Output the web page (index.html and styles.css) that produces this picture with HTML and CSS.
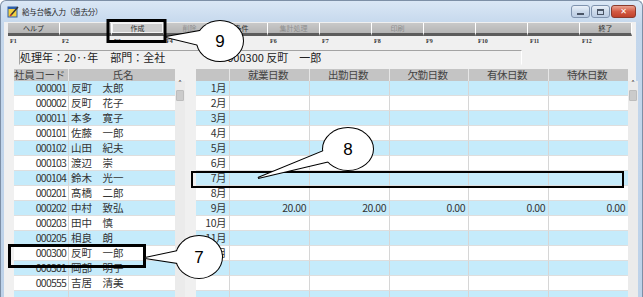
FILE: index.html
```html
<!DOCTYPE html>
<html lang="ja">
<head>
    <meta charset="UTF-8">
    <title>給与台帳入力（過去分）</title>
    <link rel="stylesheet" href="styles.css">
</head>
<body>
    <div class="window">
        <!-- Title bar -->
        <div class="titlebar">
            <svg class="app-icon" width="12" height="13" viewBox="0 0 12 13">
                <rect x="1" y="2" width="9" height="10" fill="#f3d03e" stroke="#2f5fa8" stroke-width="1"/>
                <rect x="1" y="2" width="9" height="2" fill="#2f5fa8"/>
                <path d="M4 10 L11 2" stroke="#333" stroke-width="1.5"/>
                <path d="M3 11 L4.5 9.5" stroke="#c33" stroke-width="1.5"/>
            </svg>
            <span class="title">給与台帳入力（過去分）</span>
            <div class="controls">
                <span class="ctl ctl-min"><i></i></span>
                <span class="ctl ctl-max"><i></i></span>
                <span class="ctl ctl-close">&#x2715;</span>
            </div>
        </div>

        <div class="client">
            <!-- Function keys -->
            <div class="fkeys">
                <div class="fkey"><div class="fbtn">ヘルプ</div><div class="fnum">F1</div></div>
                <div class="fkey"><div class="fbtn"></div><div class="fnum">F2</div></div>
                <div class="fkey"><div class="fbtn focus">作成</div><div class="fnum">F3</div></div>
                <div class="fkey"><div class="fbtn off">削除</div><div class="fnum">F4</div></div>
                <div class="fkey"><div class="fbtn">条件</div><div class="fnum">F5</div></div>
                <div class="fkey"><div class="fbtn off">集計処理</div><div class="fnum">F6</div></div>
                <div class="fkey"><div class="fbtn"></div><div class="fnum">F7</div></div>
                <div class="fkey"><div class="fbtn off">印刷</div><div class="fnum">F8</div></div>
                <div class="fkey"><div class="fbtn"></div><div class="fnum">F9</div></div>
                <div class="fkey"><div class="fbtn"></div><div class="fnum">F10</div></div>
                <div class="fkey"><div class="fbtn"></div><div class="fnum">F11</div></div>
                <div class="fkey"><div class="fbtn">終了</div><div class="fnum">F12</div></div>
            </div>

            <!-- Condition line -->
            <div class="info">
                <span>処理年：20‥年</span>
                <span class="dept">部門：全社</span>
                <span class="emp">000300 反町　一郎</span>
            </div>

            <div class="tables">
                <!-- Employee list -->
                <div class="grid-wrap emp-wrap">
                    <div class="grid emp-grid">
                        <div class="row head"><span>社員コード</span><span>氏名</span></div>
                        <div class="row"><span class="num">000001</span><span>反町　太郎</span></div>
                        <div class="row"><span class="num">000002</span><span>反町　花子</span></div>
                        <div class="row"><span class="num">000011</span><span>本多　寛子</span></div>
                        <div class="row"><span class="num">000101</span><span>佐藤　一郎</span></div>
                        <div class="row"><span class="num">000102</span><span>山田　紀夫</span></div>
                        <div class="row"><span class="num">000103</span><span>渡辺　崇</span></div>
                        <div class="row"><span class="num">000104</span><span>鈴木　光一</span></div>
                        <div class="row"><span class="num">000201</span><span>髙橋　二郎</span></div>
                        <div class="row"><span class="num">000202</span><span>中村　致弘</span></div>
                        <div class="row"><span class="num">000203</span><span>田中　慎</span></div>
                        <div class="row"><span class="num">000205</span><span>相良　朗</span></div>
                        <div class="row"><span class="num">000300</span><span>反町　一郎</span></div>
                        <div class="row"><span class="num">000301</span><span>岡部　明子</span></div>
                        <div class="row"><span class="num">000555</span><span>吉居　清美</span></div>
                        <div class="row"><span class="num"></span><span></span></div>
                    </div>
                    <div class="vscroll"><span class="arrow">&#x2C4;</span><span class="thumb"></span></div>
                </div>

                <!-- Monthly days -->
                <div class="grid-wrap month-wrap">
                    <div class="grid month-grid">
                        <div class="row head"><span></span><span>就業日数</span><span>出勤日数</span><span>欠勤日数</span><span>有休日数</span><span>特休日数</span></div>
                        <div class="row"><span>1月</span><span></span><span></span><span></span><span></span><span></span></div>
                        <div class="row"><span>2月</span><span></span><span></span><span></span><span></span><span></span></div>
                        <div class="row"><span>3月</span><span></span><span></span><span></span><span></span><span></span></div>
                        <div class="row"><span>4月</span><span></span><span></span><span></span><span></span><span></span></div>
                        <div class="row"><span>5月</span><span></span><span></span><span></span><span></span><span></span></div>
                        <div class="row"><span>6月</span><span></span><span></span><span></span><span></span><span></span></div>
                        <div class="row"><span>7月</span><span></span><span></span><span></span><span></span><span></span></div>
                        <div class="row"><span>8月</span><span></span><span></span><span></span><span></span><span></span></div>
                        <div class="row"><span>9月</span><span>20.00</span><span>20.00</span><span>0.00</span><span>0.00</span><span>0.00</span></div>
                        <div class="row"><span>10月</span><span></span><span></span><span></span><span></span><span></span></div>
                        <div class="row"><span>11月</span><span></span><span></span><span></span><span></span><span></span></div>
                        <div class="row"><span>12月</span><span></span><span></span><span></span><span></span><span></span></div>
                        <div class="row"><span></span><span></span><span></span><span></span><span></span><span></span></div>
                        <div class="row"><span></span><span></span><span></span><span></span><span></span><span></span></div>
                        <div class="row"><span></span><span></span><span></span><span></span><span></span><span></span></div>
                    </div>
                    <div class="vscroll"><span class="arrow">&#x2C4;</span><span class="thumb"></span></div>
                </div>
            </div>
        </div>

        <!-- Callout annotations drawn over the screen -->
        <svg class="callouts" width="643" height="297" viewBox="0 0 643 297">
            <g fill="none" stroke="#000">
                <rect x="108" y="20.5" width="57" height="21" stroke-width="3"/>
                <rect x="192" y="172" width="431" height="15" stroke-width="2"/>
                <rect x="9.5" y="245.5" width="135" height="21" stroke-width="3"/>
            </g>
            <g class="bubble">
                <path class="edge" d="M166 37 L200 31 L203 46 Z"/>
                <ellipse class="edge" cx="220" cy="41" rx="23" ry="20"/>
                <path class="body" d="M166 37 L200 31 L203 46 Z"/>
                <ellipse class="body" cx="220" cy="41" rx="23" ry="20"/>
                <text x="220" y="47">9</text>
            </g>
            <g class="bubble">
                <path class="edge" d="M258 178 L326 150 L330 161 Z"/>
                <ellipse class="edge" cx="348" cy="149" rx="25" ry="21"/>
                <path class="body" d="M258 178 L326 150 L330 161 Z"/>
                <ellipse class="body" cx="348" cy="149" rx="25" ry="21"/>
                <text x="348" y="155">8</text>
            </g>
            <g class="bubble">
                <path class="edge" d="M145 258 L178 251 L178 263 Z"/>
                <ellipse class="edge" cx="199" cy="257" rx="23" ry="21"/>
                <path class="body" d="M145 258 L178 251 L178 263 Z"/>
                <ellipse class="body" cx="199" cy="257" rx="23" ry="21"/>
                <text x="199" y="263">7</text>
            </g>
        </svg>
    </div>
</body>
</html>
```

FILE: styles.css
```css
* {
    box-sizing: border-box;
}

body {
    margin: 0;
    background: #fff;
    font-family: "Noto Sans CJK JP", sans-serif;
}

/* Window frame */
.window {
    position: relative;
    width: 643px;
    height: 297px;
    overflow: hidden;
    display: flex;
    flex-direction: column;
    background: linear-gradient(#dae7f5, #c4d7ec 24px, #bdd2e9);
    border: 1px solid #7d8fa6;
    border-bottom: none;
    border-radius: 6px 6px 0 0;
}

.titlebar {
    height: 21px;
    display: flex;
    align-items: center;
    padding-left: 6px;
    flex-shrink: 0;
}

.app-icon {
    display: block;
}

.title {
    margin-left: 3px;
    font-size: 7.5px;
    color: #1e1e1e;
    letter-spacing: -0.2px;
}

.controls {
    margin-left: auto;
    margin-right: 6px;
    display: flex;
    gap: 1px;
    align-self: flex-start;
    margin-top: 4px;
}

.ctl {
    width: 19px;
    height: 13px;
    border: 1px solid #7f93ae;
    border-radius: 3px;
    background: linear-gradient(#eaf1f9, #cbd9ea 50%, #bccde3);
    display: flex;
    align-items: center;
    justify-content: center;
}

.ctl-min i {
    width: 7px;
    height: 2px;
    margin-top: 4px;
    background: #4a5566;
}

.ctl-max i {
    width: 7px;
    height: 6px;
    border: 1px solid #4a5566;
    border-top-width: 2px;
}

.ctl-close {
    width: 25px;
    border-color: #8b3a2c;
    background: linear-gradient(#eaa392, #d35a43 50%, #c0412b);
    color: #fff;
    font-size: 8px;
    font-weight: bold;
    font-family: "DejaVu Sans", sans-serif;
}

/* Client area */
.client {
    flex: 1;
    margin: 0 6px 0 3px;
    background: #f0f0f0;
    padding-left: 4px;
    display: flex;
    flex-direction: column;
}

.fkeys {
    display: grid;
    grid-template-columns: repeat(12, 52px);
    margin-top: 1px;
}

.fbtn {
    height: 13px;
    background: linear-gradient(#c9c9c9, #b5b5b5);
    border-right: 1px solid #fff;
    border-bottom: 3px solid #5c5c5c;
    font-size: 7px;
    line-height: 10px;
    text-align: center;
    color: #2e2e2e;
}

.fbtn.off {
    color: #8e8e8e;
}

.fbtn.focus {
    background: #cdcdcd;
    box-shadow: inset 0 0 0 1px #f4f4f4;
}

.fnum {
    height: 10px;
    padding-left: 2px;
    font-family: "Liberation Serif", serif;
    font-weight: bold;
    font-size: 6px;
    line-height: 10px;
    color: #333;
}

/* Condition line */
.info {
    margin: 4px 0 0 11px;
    width: 503px;
    height: 15px;
    border: 1px solid #a3a3a3;
    border-right-color: #fff;
    border-bottom-color: #f0f0f0;
    display: flex;
    font-size: 11px;
    line-height: 13px;
    color: #222;
    white-space: pre;
}

.dept {
    margin-left: 12px;
}

.emp {
    margin-left: 62px;
}

/* Grids */
.tables {
    display: flex;
    gap: 11px;
    margin: 4px 0 0 6px;
}

.grid-wrap {
    display: flex;
}

.grid {
    background: #fff;
}

.row {
    display: grid;
    height: 15px;
    font-size: 10.5px;
    line-height: 14px;
    color: #333;
}

.row:nth-child(even) {
    background: #c5ebfb;
}

.row span {
    border-right: 1px solid #d6d6d6;
    border-bottom: 1px solid #dedede;
    overflow: hidden;
    white-space: pre;
    text-align: right;
    padding-right: 2px;
}

.row.head {
    height: 12px;
    background: #c4c4c4;
    font-size: 10.5px;
    line-height: 12px;
    color: #454545;
}

.row.head span {
    border-right-color: #e6e6e6;
    border-bottom: none;
    overflow: visible;
    text-align: center;
    padding: 0;
}

.emp-grid .row {
    grid-template-columns: 55px 106px;
}

.emp-grid .row span:last-child {
    text-align: left;
    padding-left: 2px;
    border-right: none;
}

.emp-grid .row.head span:first-child {
    text-align: left;
    letter-spacing: -0.3px;
}

.emp-grid .row.head span:last-child {
    text-align: center;
}

.num {
    letter-spacing: -0.8px;
}

.month-grid .row {
    grid-template-columns: 34px 80px 80px 79px 80px 79px;
    letter-spacing: -0.5px;
}

.month-grid .row span {
    padding-right: 3px;
}

.month-grid .row span:last-child {
    border-right: none;
}

.vscroll {
    width: 10px;
    margin-top: 12px;
    background: #ebebeb;
    display: flex;
    flex-direction: column;
    align-items: center;
}

.arrow {
    font-family: "DejaVu Sans", sans-serif;
    font-size: 8px;
    line-height: 8px;
    height: 9px;
    color: #333;
}

.thumb {
    width: 8px;
    height: 11px;
    background: #cbcbcb;
    border: 1px solid #bdbdbd;
    border-radius: 1px;
}

/* Annotation callouts */
.callouts {
    position: absolute;
    top: -1px;
    left: -1px;
    pointer-events: none;
}

.bubble .edge {
    fill: #fff;
    stroke: #000;
    stroke-width: 2;
}

.bubble .body {
    fill: #fff;
    stroke: none;
}

.bubble text {
    font-family: "Liberation Sans", sans-serif;
    font-size: 17px;
    text-anchor: middle;
    fill: #000;
}
```
